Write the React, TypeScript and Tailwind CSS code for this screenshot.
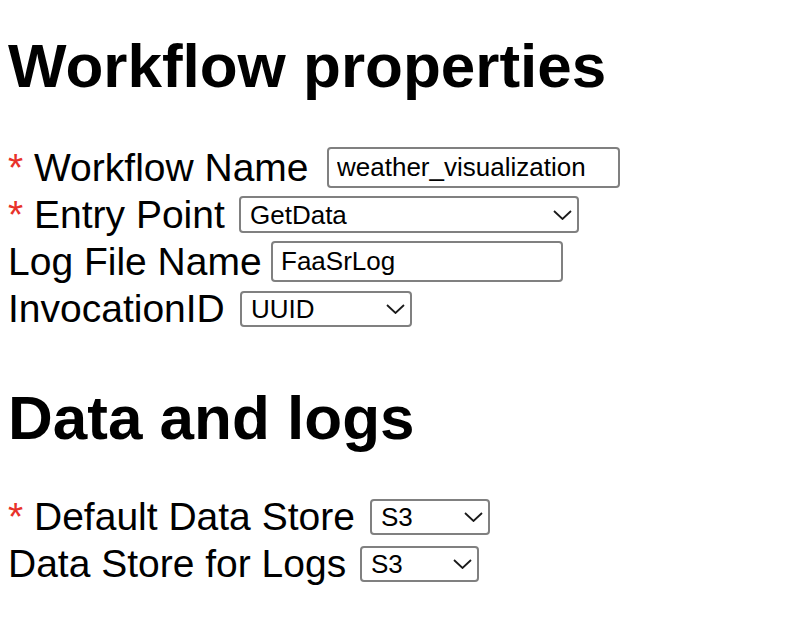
import React from "react";

const font = { fontFamily: '"Liberation Sans", Arial, sans-serif' };

function Chevron() {
  return (
    <svg
      width="19"
      height="10"
      viewBox="0 0 19 10"
      className="pointer-events-none absolute right-[7px] top-1/2 -translate-y-1/2"
    >
      <polyline points="1,1 9.5,9 18,1" fill="none" stroke="#1a1a1a" strokeWidth="1.8" strokeLinejoin="miter" />
    </svg>
  );
}

function Star() {
  return <span className="text-[#e8322a]">*&nbsp;</span>;
}

function Select({ w, h, value }: { w: string; h: string; value: string }) {
  return (
    <div className={`relative shrink-0 leading-none ${w} ${h}`}>
      <select
        defaultValue={value}
        className="block h-full w-full appearance-none rounded-[4px] border-2 border-[#808080] bg-white pl-[9px] text-[26px] leading-none text-black outline-none"
        style={font}
      >
        <option value={value}>{value}</option>
      </select>
      <Chevron />
    </div>
  );
}

function Input({ w, h, value }: { w: string; h: string; value: string }) {
  return (
    <input
      defaultValue={value}
      className={`block shrink-0 ${w} ${h} rounded-[4px] border-2 border-[#808080] bg-white pl-[8px] text-[26px] leading-none text-black outline-none`}
      style={font}
    />
  );
}

export default function App() {
  return (
    <div className="min-h-[632px] bg-white pl-[8px] pt-[31px] text-black" style={font}>
      <h1 className="h-[70px] text-[62px] font-bold leading-[70px]">Workflow properties</h1>

      <div className="mt-[43px] flex flex-col text-[39px] leading-[46px]">
        <div className="flex h-[47px] items-center">
          <span className="w-[319px] shrink-0 whitespace-nowrap">
            <Star />
            Workflow Name
          </span>
          <Input w="w-[293px]" h="h-[41px]" value="weather_visualization" />
        </div>
        <div className="flex h-[47px] items-center">
          <span className="w-[231px] shrink-0 whitespace-nowrap">
            <Star />
            Entry Point
          </span>
          <Select w="w-[340px]" h="h-[37px]" value="GetData" />
        </div>
        <div className="flex h-[47px] items-center">
          <span className="w-[263px] shrink-0 whitespace-nowrap">Log File Name</span>
          <Input w="w-[292px]" h="h-[41px]" value="FaaSrLog" />
        </div>
        <div className="flex h-[47px] items-center">
          <span className="w-[232px] shrink-0 whitespace-nowrap">InvocationID</span>
          <Select w="w-[172px]" h="h-[36px]" value="UUID" />
        </div>
      </div>

      <h2 className="mt-[51px] h-[70px] text-[62px] font-bold leading-[70px]">Data and logs</h2>

      <div className="mt-[40px] flex flex-col text-[39px] leading-[46px]">
        <div className="flex h-[47px] items-center">
          <span className="w-[362px] shrink-0 whitespace-nowrap">
            <Star />
            Default Data Store
          </span>
          <Select w="w-[120px]" h="h-[36px]" value="S3" />
        </div>
        <div className="flex h-[47px] items-center">
          <span className="w-[352px] shrink-0 whitespace-nowrap">Data Store for Logs</span>
          <Select w="w-[119px]" h="h-[36px]" value="S3" />
        </div>
      </div>
    </div>
  );
}
